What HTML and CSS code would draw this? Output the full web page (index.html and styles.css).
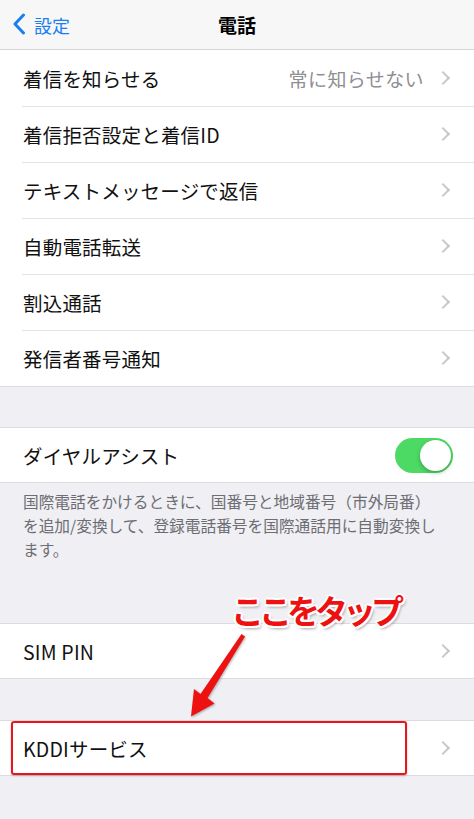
FILE: index.html
```html
<!DOCTYPE html>
<html lang="ja">
<head>
<meta charset="utf-8">
<title>電話</title>
<link rel="stylesheet" href="styles.css">
</head>
<body>
<div class="screen">
  <header class="nav">
    <div class="back">
      <svg class="back-chev" width="14" height="22" viewBox="0 0 14 22"><path d="M11.5 2 L3 11 L11.5 20" fill="none" stroke="#1a7ef0" stroke-width="3" stroke-linecap="round" stroke-linejoin="round"/></svg>
      <span class="back-label">設定</span>
    </div>
    <div class="nav-title">電話</div>
  </header>

  <section class="group first">
    <div class="row"><span class="label">着信を知らせる</span><span class="value">常に知らせない</span><span class="chev"></span></div>
    <div class="row"><span class="label">着信拒否設定と着信ID</span><span class="chev"></span></div>
    <div class="row"><span class="label">テキストメッセージで返信</span><span class="chev"></span></div>
    <div class="row"><span class="label">自動電話転送</span><span class="chev"></span></div>
    <div class="row"><span class="label">割込通話</span><span class="chev"></span></div>
    <div class="row"><span class="label">発信者番号通知</span><span class="chev"></span></div>
  </section>

  <section class="group assist">
    <div class="row"><span class="label">ダイヤルアシスト</span><span class="toggle"><span class="knob"></span></span></div>
  </section>
  <p class="footnote">国際電話をかけるときに、国番号と地域番号（市外局番）を追加/変換して、登録電話番号を国際通話用に自動変換します。</p>

  <section class="group sim">
    <div class="row"><span class="label">SIM PIN</span><span class="chev"></span></div>
  </section>

  <section class="group kddi">
    <div class="row"><span class="label">KDDIサービス</span><span class="chev"></span></div>
  </section>

  <div class="highlight"></div>
  <div class="callout">ここをタップ</div>
  <svg class="arrow" width="474" height="819" viewBox="0 0 474 819">
    <polygon points="241.5,634 245,636.5 207.5,698 214.5,703.5 191,716.5 194,689 200.5,694" fill="#ee1111"/>
  </svg>
</div>
</body>
</html>
```

FILE: styles.css
```css
html, body {
  margin: 0;
  padding: 0;
  background: #efeff4;
}
body {
  font-family: "Noto Sans CJK JP", "Noto Sans", sans-serif;
  width: 474px;
  height: 819px;
  overflow: hidden;
  text-spacing-trim: space-all;
}
.screen {
  position: relative;
  width: 474px;
  height: 819px;
  background: #efeff4;
}
.nav {
  height: 49px;
  background: #f7f7f7;
  border-bottom: 1px solid #d6d6d9;
  display: flex;
  align-items: center;
  justify-content: center;
  position: relative;
}
.back {
  position: absolute;
  left: 12px;
  top: 0;
  height: 49px;
  display: flex;
  align-items: center;
  gap: 8px;
}
.back-chev { display: block; margin-top: -1px; }
.back-label {
  color: #1a7ef0;
  font-size: 18px;
  line-height: 1;
}
.nav-title {
  font-size: 19px;
  font-weight: 700;
  color: #000;
}
.group {
  background: #fff;
  border-top: 1px solid #dcdce0;
  border-bottom: 1px solid #dcdce0;
}
.group.first { border-top: none; }
.group.assist { margin-top: 40px; }
.group.sim { margin-top: 60px; }
.group.kddi { margin-top: 41px; }
.row {
  height: 56px;
  display: flex;
  align-items: center;
  padding: 0 22px 0 23px;
  position: relative;
}
.row + .row::before {
  content: "";
  position: absolute;
  top: 0;
  left: 22px;
  right: 0;
  border-top: 1px solid #e3e3e6;
}
.assist .row, .sim .row, .kddi .row { height: 54px; }
.label {
  font-size: 19.5px;
  color: #111;
  flex: 1;
  letter-spacing: 0.2px;
}
.value {
  font-size: 19px;
  color: #8e8e93;
  margin-right: 14px;
  letter-spacing: 0.4px;
}
.chev {
  width: 8px;
  height: 8px;
  border-right: 2px solid #c7c7cc;
  border-top: 2px solid #c7c7cc;
  transform: rotate(45deg);
  margin-right: 4px;
}
.toggle {
  width: 58px;
  height: 35px;
  border-radius: 18px;
  background: #4cd964;
  position: relative;
  margin-right: -1px;
}
.knob {
  position: absolute;
  right: 2px;
  top: 2px;
  width: 31px;
  height: 31px;
  border-radius: 50%;
  background: #fff;
  box-shadow: 0 2px 4px rgba(0,0,0,0.25);
}
.footnote {
  margin: 0;
  padding: 7px 33px 0 23px;
  font-size: 15.7px;
  line-height: 24px;
  color: #6d6d72;
  height: 73px;
  text-spacing-trim: space-all;
}
.highlight {
  position: absolute;
  left: 11px;
  top: 721px;
  width: 392px;
  height: 50px;
  border: 2px solid #e8161c;
  border-radius: 3px;
  box-shadow: 0 1px 2px rgba(0,0,0,0.25);
}
.callout {
  position: absolute;
  left: 231px;
  top: 588px;
  font-size: 33px;
  line-height: 44px;
  font-weight: 700;
  letter-spacing: -5px;
  color: #ee1111;
  text-shadow:
    2px 0 0 #fff, -2px 0 0 #fff, 0 2px 0 #fff, 0 -2px 0 #fff,
    1.5px 1.5px 0 #fff, -1.5px 1.5px 0 #fff, 1.5px -1.5px 0 #fff, -1.5px -1.5px 0 #fff,
    2px 3px 3px rgba(0,0,0,0.35);
}
.arrow {
  position: absolute;
  left: 0;
  top: 0;
  pointer-events: none;
  filter: drop-shadow(1px 1px 1px rgba(0,0,0,0.3));
}
```
